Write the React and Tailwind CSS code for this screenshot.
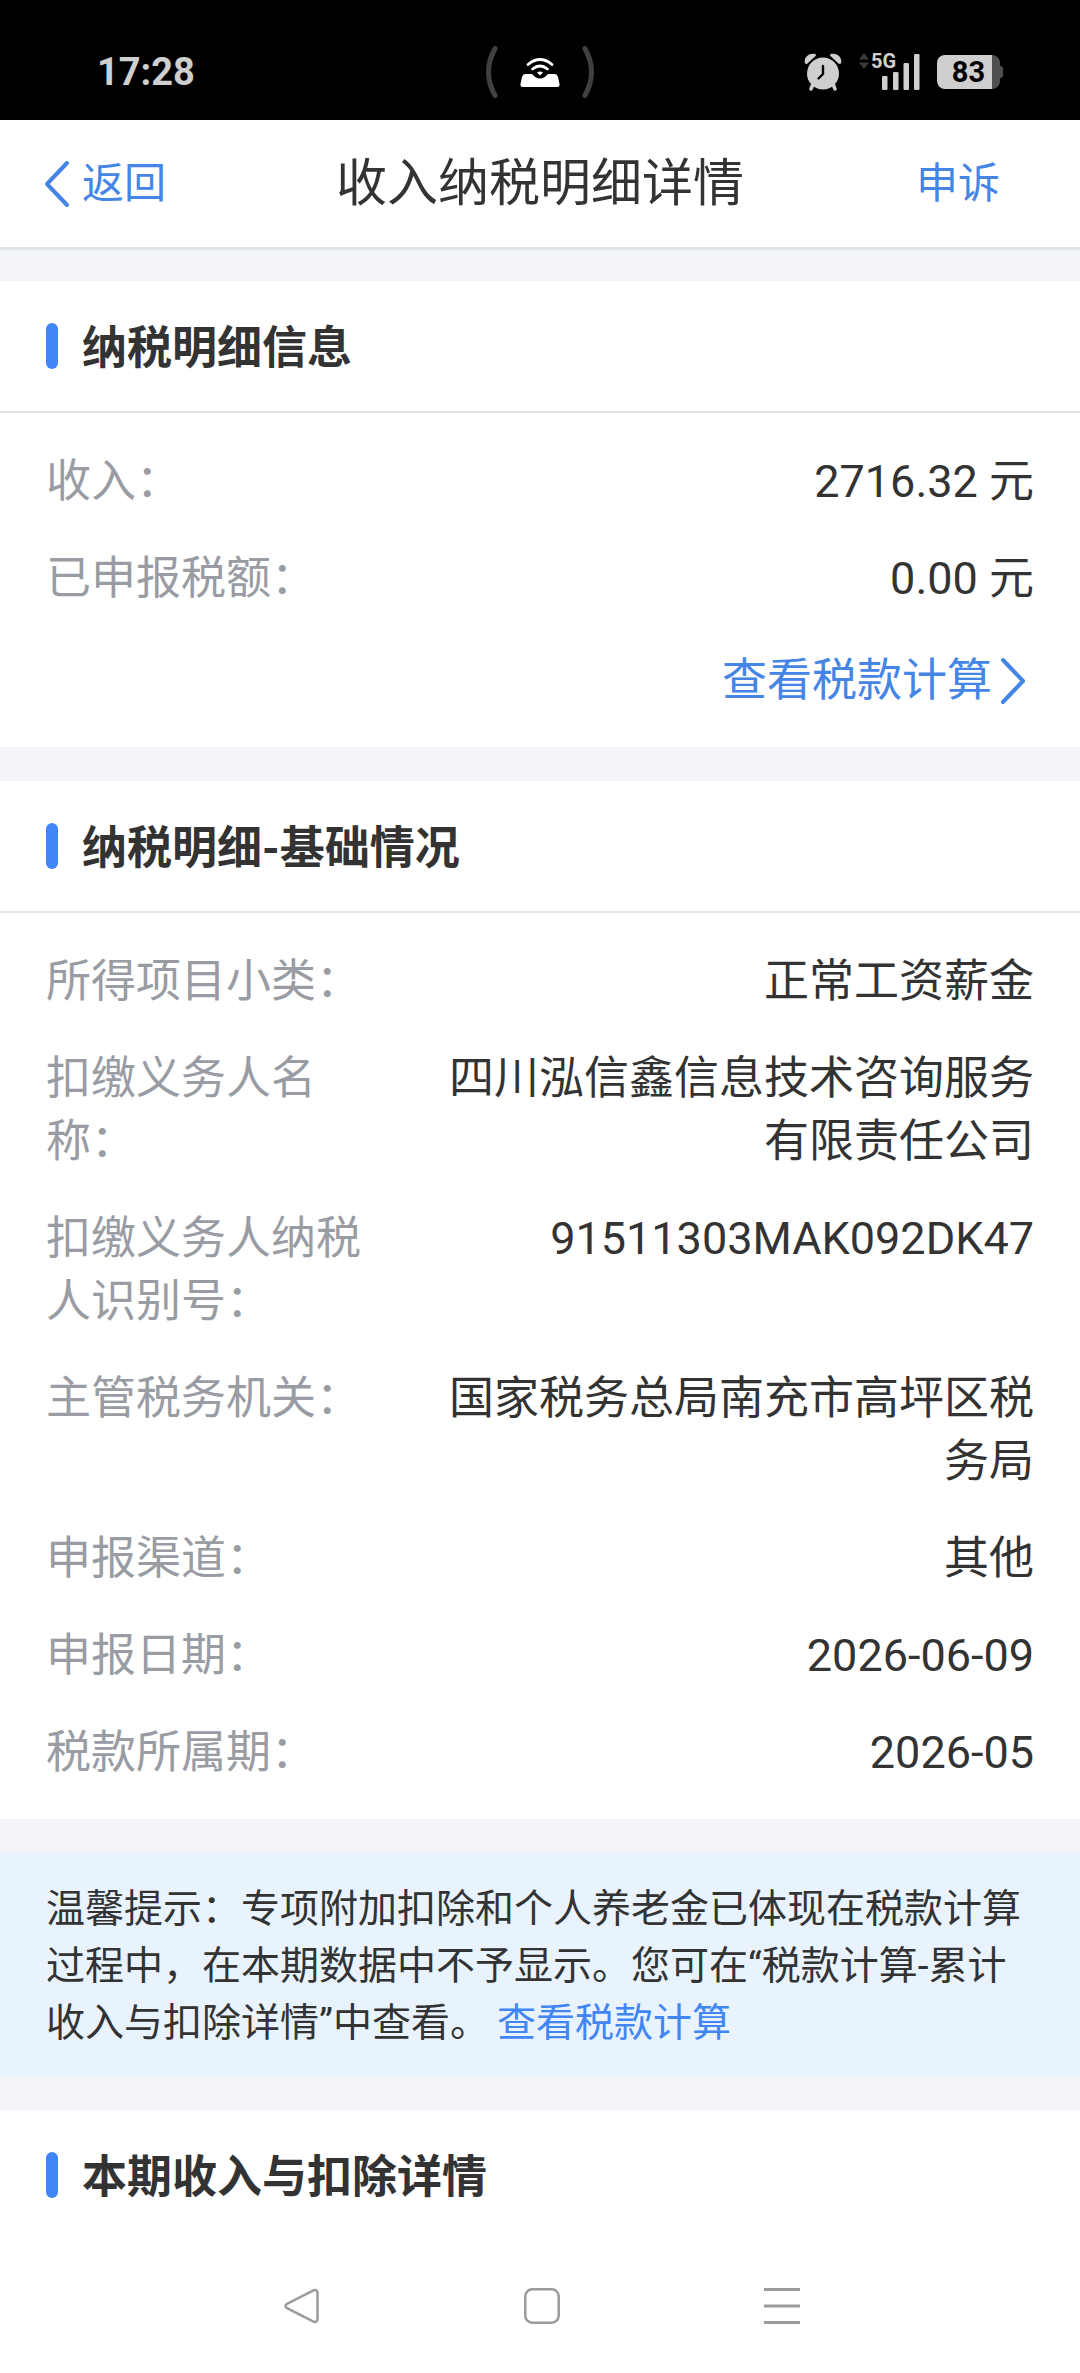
const incomeRows = [
    { label: "收入：", value: "2716.32 元" },
    { label: "已申报税额：", value: "0.00 元" },
];

const baseRows = [
    { label: "所得项目小类：", value: "正常工资薪金" },
    { label: "扣缴义务人名称：", value: "四川泓信鑫信息技术咨询服务有限责任公司" },
    { label: "扣缴义务人纳税人识别号：", value: "91511303MAK092DK47" },
    { label: "主管税务机关：", value: "国家税务总局南充市高坪区税务局" },
    { label: "申报渠道：", value: "其他" },
    { label: "申报日期：", value: "2026-06-09" },
    { label: "税款所属期：", value: "2026-05" },
];

const Chevron = ({ className }) => (
    <svg className={className} viewBox="0 0 26 48" fill="none" stroke="currentColor" strokeWidth="4" strokeLinecap="round" strokeLinejoin="round">
        <path d="M23 3 3 24l20 21" />
    </svg>
);

const AlarmIcon = () => (
    <svg className="h-[38px] w-[38px]" viewBox="0 0 38 38" fill="#cfcfcf">
        <circle cx="19" cy="20.5" r="16" />
        <path d="M1 10.500C-.5 4 5 -.5 11.500 1L12 2.500 3 11z" />
        <path d="M37 10.500C38.500 4 33 -.5 26.500 1L26 2.500 35 11z" />
        <path d="M9 31 7 36M29 31l2 5" stroke="#cfcfcf" strokeWidth="3.500" strokeLinecap="round" />
        <path d="M19 13v8l-4.500 4.500" fill="none" stroke="#000" strokeWidth="2.400" strokeLinecap="round" strokeLinejoin="round" />
    </svg>
);

const CastIcon = () => (
    <svg className="h-[52px] w-[108px]" viewBox="0 0 108 52" fill="none">
        <path d="M9 2.500Q-4 26 9 49.500M99 2.500q13 23.500 0 47" stroke="#404040" strokeWidth="5" strokeLinecap="round" />
        <path d="M39 28h7q8 9 16 0h7q2 0 3 3l1.500 7q.5 3-2.500 3H37q-3 0-2.500-3L36 31q1-3 3-3z" fill="#fff" />
        <path d="M42 18.500q12-10 24 0M46.500 23q7.500-6 15 0" stroke="#fff" strokeWidth="2.800" strokeLinecap="round" />
        <path d="M51 26.500q3-2 6 0l-3 3z" fill="#fff" />
    </svg>
);

const SignalIcon = () => (
    <div className="relative h-[38px] w-[61px]">
        <svg className="h-[38px] w-[61px]" viewBox="0 0 61 38" fill="#cfcfcf">
            <path d="M0 6.500 5 0l5 6.500zM0 9.500 5 16l5-6.500z" fill="#3a3a3a" />
            <rect x="23" y="23" width="5.500" height="14" rx="1.200" />
            <rect x="34" y="19" width="5.500" height="18" rx="1.200" />
            <rect x="44.500" y="10" width="5.500" height="27" rx="1.200" />
            <rect x="55" y="1" width="5.500" height="36" rx="1.200" />
        </svg>
        <span className="absolute left-3 top-0 text-[20px] leading-4 font-bold text-[#cfcfcf]">5G</span>
    </div>
);

const Battery = () => (
    <div className="flex items-center">
        <div className="flex h-[34px] w-[63px] items-center justify-center rounded-[8px] bg-linear-to-r from-[#cfcfcf] from-87% to-[#505050] to-87%">
            <span className="text-[29px] leading-[34px] font-bold text-black">83</span>
        </div>
        <div className="h-3 w-[3px] rounded-r-[3px] bg-[#505050]"></div>
    </div>
);

const StatusBar = () => (
    <div className="grid h-[120px] grid-cols-[1fr_auto_1fr] items-center bg-black px-[77px] pt-6">
        <span className="pl-5 text-[38px] leading-[48px] font-bold text-[#cfcfcf]">17:28</span>
        <CastIcon />
        <div className="flex items-center justify-end gap-[17px]">
            <AlarmIcon />
            <SignalIcon />
            <Battery />
        </div>
    </div>
);

const SectionTitle = ({ children }) => (
    <div className="flex h-[130px] items-center gap-6 px-[46px]">
        <span className="h-[46px] w-3 rounded-full bg-[#4286f5]"></span>
        <h2 className="pt-1 text-[45px] leading-[63px] font-bold">{children}</h2>
    </div>
);

const Rows = ({ rows }) => (
    <dl className="flex flex-col gap-[34px] border-t-2 border-[#e4e5e7] px-[46px] pt-[37px]">
        {rows.map((row) => (
            <div key={row.label} className="flex justify-between text-[45px] leading-[63px]">
                <dt className="w-1/3 text-[#999ca3]">{row.label}</dt>
                <dd className="w-3/5 text-right">{row.value}</dd>
            </div>
        ))}
    </dl>
);

const NavBar = () => (
    <nav className="grid h-[131px] grid-cols-3 items-center justify-items-center bg-white pl-[182px] pr-[178px] text-[#9b9b9b]">
        <button aria-label="返回键">
            <svg className="h-9 w-9" viewBox="0 0 36 36" fill="none" stroke="currentColor" strokeWidth="2.500" strokeLinejoin="round">
                <path d="M29.500 2.300 3 15.800q-3 2.200 0 4.400l26.500 13.500q3.500 1 4-2.500V4.800q-.5-3.500-4-2.500z" />
            </svg>
        </button>
        <button aria-label="主屏幕">
            <svg className="h-9 w-9" viewBox="0 0 36 36" fill="none" stroke="currentColor" strokeWidth="2.500">
                <rect x="1.300" y="1.300" width="33.400" height="33.400" rx="7" />
            </svg>
        </button>
        <button aria-label="最近任务">
            <svg className="h-9 w-9" viewBox="0 0 36 36" fill="none" stroke="currentColor" strokeWidth="2.800">
                <path d="M0 1.500h36M0 18h36M0 34.500h36" />
            </svg>
        </button>
    </nav>
);

const App = () => {
    return (
        <div className="min-h-screen bg-white font-['Roboto','Noto_Sans_CJK_SC',sans-serif] text-[#333333]">
            <StatusBar />
            <header className="grid h-[130px] grid-cols-[1fr_auto_1fr] items-center border-b-3 border-[#e0e3e6] bg-white px-11">
                <button className="flex items-center gap-3 text-[42px] leading-[60px] text-[#4585e6]">
                    <Chevron className="h-12 w-[26px]" />
                    <span>返回</span>
                </button>
                <h1 className="text-[51px] leading-[70px]">收入纳税明细详情</h1>
                <button className="justify-self-end pr-9 text-[42px] leading-[60px] text-[#4585e6]">申诉</button>
            </header>

            <main className="flex flex-col gap-[34px] bg-[#f3f5f9] pt-[31px]">
                <section className="bg-white pb-[35px]">
                    <SectionTitle>纳税明细信息</SectionTitle>
                    <Rows rows={incomeRows} />
                    <div className="mt-[39px] flex justify-end px-[54px]">
                        <a href="#calc" className="flex items-center gap-2 text-[45px] leading-[63px] text-[#4585e6]">
                            查看税款计算
                            <Chevron className="h-12 w-[26px] rotate-180" />
                        </a>
                    </div>
                </section>

                <section className="bg-white pb-[35px]">
                    <SectionTitle>纳税明细-基础情况</SectionTitle>
                    <Rows rows={baseRows} />
                </section>

                <p className="bg-[#e8f3fe] px-[46px] pb-6 pt-7 text-[39px] leading-[57px]">
                    温馨提示：专项附加扣除和个人养老金已体现在税款计算过程中，在本期数据中不予显示。您可在“税款计算-累计收入与扣除详情”中查看。
                    <a href="#calc" className="ml-2 text-[#4286f5]">查看税款计算</a>
                </p>

                <section className="bg-white">
                    <SectionTitle>本期收入与扣除详情</SectionTitle>
                </section>
            </main>
            <NavBar />
        </div>
    );
};
export default App;
